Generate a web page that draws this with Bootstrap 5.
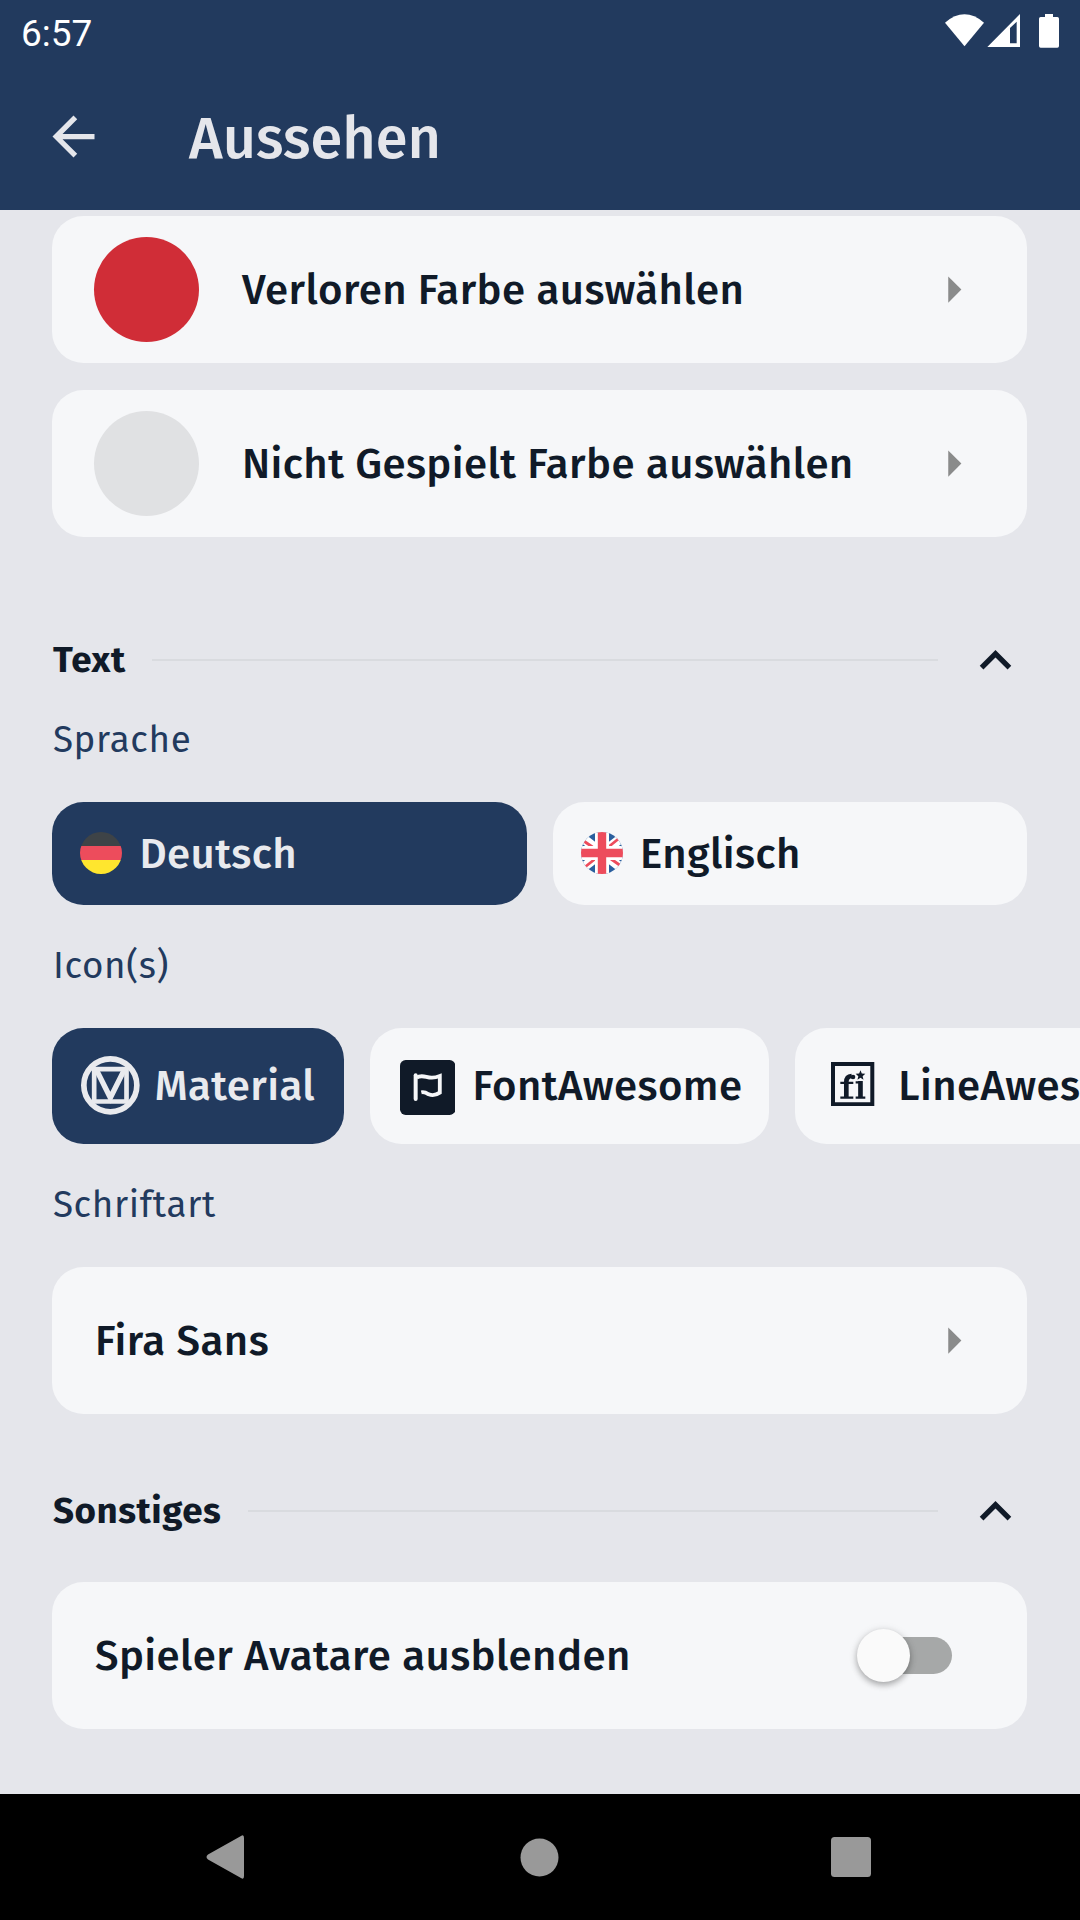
<!DOCTYPE html>
<html lang="de">
<head>
<meta charset="utf-8">
<meta name="viewport" content="width=device-width, initial-scale=1">
<title>Aussehen</title>
<link href="https://cdn.jsdelivr.net/npm/bootstrap@5.3.0/dist/css/bootstrap.min.css" rel="stylesheet">
<style>
  :root { --navy:#223a5e; --page:#e5e6eb; --tile:#f6f7f9; --ink:#101a28; }
  body { background:var(--page); font-family:"Fira Sans","Noto Sans",sans-serif; color:var(--ink); }
  svg { display:block; flex:none; }
  .screen { width:1080px; height:1920px; }
  .top-area { background:var(--navy); height:210px; flex:none; }
  .status-row { height:63px; padding:2px 21px 0 21px; font-family:Roboto,sans-serif; font-size:37px; line-height:62px; }
  .status-row span { padding-top:2px; }
  .status-row svg { margin-top:-3px; }
  .title-row { height:147px; padding-left:42px; gap:84px; color:var(--page); }
  .title-row h1 { font-size:57.75px; font-weight:500; line-height:69px; padding-top:3px; }
  .content-area { padding:6.4px 52.6px 0 52.4px; min-height:0; }
  .tile { background:var(--tile); border-radius:31.5px; letter-spacing:.41px; font-size:42px; font-weight:500; line-height:50px; white-space:nowrap; }
  .tile.active { background:var(--navy); color:#e9eaee; }
  .tile-lg { height:147px; padding:0 42.4px 0 42px; }
  .tile-lg + .tile-lg { margin-top:26.5px; }
  .tile-text { padding:1px 0 0 .6px; }
  .swatch { width:105px; height:105px; margin-right:42px; }
  .swatch-lost { background:#d02d37; }
  .swatch-idle { background:#e0e1e3; }
  .caret { fill:#8a8b8b; }
  .group-head { height:60px; gap:26.25px; font-size:36.75px; font-weight:700; letter-spacing:.55px; line-height:44px; padding-left:.5px; }
  .group-text { margin:93.4px 0 27.9px; }
  .group-misc { margin:67.5px 0 40.3px; }
  .rule { height:2px; background:#d9dbdf; }
  .label { color:var(--navy); font-size:36.75px; line-height:44px; letter-spacing:.66px; margin-bottom:39.7px; padding-left:.5px; }
  .choices { gap:26.25px; margin-bottom:39.5px; }
  .lang { height:102.75px; padding:0 27.5px; gap:17px; }
  .lang .tile-text { padding:2px 0 0 .5px; }
  .icons { margin-right:-52.6px; }
  .iconset { height:115.75px; flex:none; }
  .set-material { width:291.5px; padding-left:28.6px; gap:15px; letter-spacing:.41px; }
  .set-fa { width:399px; padding-left:30px; gap:16.5px; }
  .set-fa svg { margin-top:4px; }
  .set-la { width:372px; padding-left:36px; gap:23px; }
  .set-la svg { margin-bottom:3px; }
  .iconset .tile-text { padding-top:0; }
  .switch-track { width:82px; height:37px; border-radius:19px; background:#a6a8a8; margin-right:33.5px; }
  .switch-knob { width:53px; height:53px; margin-left:-13px; background:#fafafa; box-shadow:0 3px 6px rgba(0,0,0,.28),0 1px 10px rgba(0,0,0,.1); }
  .nav-keys { height:126px; flex:none; background:#000; padding:0 209.5px 0 206px; }
  .nav-keys svg { fill:#999; }
  .key-home { margin-left:4.5px; }
</style>
</head>
<body>
<div class="screen d-flex flex-column overflow-hidden">
  <header class="top-area">
    <div class="status-row d-flex justify-content-between align-items-center text-white">
      <span>6:57</span>
      <svg width="114" height="34" viewBox="0 0 342 102" fill="#fff">
        <path d="M0 26Q58.500-24 117 26L58.500 97Z"/>
        <path fill-rule="evenodd" d="M127 99L225 0V99ZM195 42V88H215V23Z"/>
        <path d="M300 0H324V9H337Q342 9 342 14V96Q342 101 337 101H287Q282 101 282 96V14Q282 9 287 9H300Z"/>
      </svg>
    </div>
    <div class="title-row d-flex align-items-center">
      <svg width="63" height="63" viewBox="0 0 24 24" fill="currentColor"><path d="M20 11H7.830l5.590-5.590L12 4l-8 8 8 8 1.410-1.410L7.830 13H20v-2z"/></svg>
      <h1 class="mb-0">Aussehen</h1>
    </div>
  </header>

  <main class="content-area flex-grow-1">
    <div class="tile tile-lg d-flex align-items-center">
      <span class="swatch swatch-lost rounded-circle"></span>
      <span class="tile-text flex-grow-1">Verloren Farbe auswählen</span>
      <svg class="caret" width="63" height="63" viewBox="0 0 24 24"><path d="M10 17l5-5-5-5z"/></svg>
    </div>
    <div class="tile tile-lg d-flex align-items-center">
      <span class="swatch swatch-idle rounded-circle"></span>
      <span class="tile-text flex-grow-1">Nicht Gespielt Farbe auswählen</span>
      <svg class="caret" width="63" height="63" viewBox="0 0 24 24"><path d="M10 17l5-5-5-5z"/></svg>
    </div>

    <div class="group-head group-text d-flex align-items-center">
      <span>Text</span><span class="rule flex-grow-1"></span>
      <svg width="63" height="63" viewBox="0 0 24 24" fill="currentColor"><path d="M12 8l-6 6 1.410 1.410L12 10.830l4.590 4.580L18 14z"/></svg>
    </div>
    <div class="label">Sprache</div>
    <div class="choices d-flex">
      <div class="tile lang active d-flex align-items-center w-50">
        <svg width="42" height="42" viewBox="0 0 42 42">
          <clipPath id="disc"><circle cx="21" cy="21" r="21"/></clipPath>
          <g clip-path="url(#disc)"><path fill="#3e4347" d="M0 0H42V14H0z"/><path fill="#ed4c5c" d="M0 14H42V28H0z"/><path fill="#ffe62e" d="M0 28H42V42H0z"/></g>
        </svg>
        <span class="tile-text">Deutsch</span>
      </div>
      <div class="tile lang d-flex align-items-center w-50">
        <svg width="42" height="42" viewBox="0 0 42 42">
          <g clip-path="url(#disc)" fill="none">
            <path fill="#2a5f9e" d="M0 0H42V42H0z"/>
            <path stroke="#fff" stroke-width="9.300" d="M-4 1.750L46 40.250M46 1.750L-4 40.250"/>
            <path stroke="#ed4c5c" stroke-width="2.800" d="M2 8.500L11.500 15M38.500 6L28 14.500M14 27L4 35M30 27L40 34"/>
            <path stroke="#fff" stroke-width="14" d="M21 0V42M0 21H42"/>
            <path stroke="#ed4c5c" stroke-width="8.400" d="M21 0V42M0 21H42"/>
          </g>
        </svg>
        <span class="tile-text">Englisch</span>
      </div>
    </div>

    <div class="label">Icon(s)</div>
    <div class="choices icons d-flex overflow-hidden">
      <div class="tile iconset set-material active d-flex align-items-center">
        <svg width="58.700" height="58.700" viewBox="0 0 176 176" fill="none" stroke="currentColor">
          <circle cx="88" cy="88" r="79.500" stroke-width="17"/>
          <path stroke-width="14" d="M39.500 39.500H136.500V136.500H39.500z"/>
          <path stroke-width="16" d="M47 43L88 125L129 43"/>
        </svg>
        <span class="tile-text ps-0">Material</span>
      </div>
      <div class="tile iconset set-fa d-flex align-items-center">
        <svg width="55.300" height="55" viewBox="0 0 166 165" fill="none" stroke="#f6f7f9">
          <rect width="166" height="165" rx="17" fill="#101a28" stroke="none"/>
          <path stroke-width="12" stroke-linecap="round" d="M47 46V117"/>
          <path stroke-width="11.500" d="M50 53C66 42 80 54 96 53C104 53 112 51 119.500 48V98C108 106 98 108 86 103C80 99 72 95 64 97"/>
        </svg>
        <span class="tile-text">FontAwesome</span>
      </div>
      <div class="tile iconset set-la d-flex align-items-center">
        <svg width="43.300" height="44.300" viewBox="0 0 130 133" fill="none" stroke="#101a28">
          <path stroke-width="12" d="M6 6H124V127H6z"/>
          <path stroke-width="14" d="M46 107V60Q46 43 62 42"/>
          <circle cx="66" cy="45" r="7" fill="#101a28" stroke="none"/>
          <path stroke-width="14" d="M88.500 107V57"/>
          <path stroke-width="7" d="M28 62.500H67M28 107H67M74 61H90M74 107H103"/>
          <path fill="#101a28" stroke="none" d="M88.500 25l4 9.500 10.500 1-8 7 2.500 10.500-9-5.500-9 5.500 2.500-10.500-8-7 10.500-1z"/>
        </svg>
        <span class="tile-text">LineAwesome</span>
      </div>
    </div>

    <div class="label">Schriftart</div>
    <div class="tile tile-lg d-flex align-items-center">
      <span class="tile-text flex-grow-1">Fira Sans</span>
      <svg class="caret" width="63" height="63" viewBox="0 0 24 24"><path d="M10 17l5-5-5-5z"/></svg>
    </div>

    <div class="group-head group-misc d-flex align-items-center">
      <span>Sonstiges</span><span class="rule flex-grow-1"></span>
      <svg width="63" height="63" viewBox="0 0 24 24" fill="currentColor"><path d="M12 8l-6 6 1.410 1.410L12 10.830l4.590 4.580L18 14z"/></svg>
    </div>
    <div class="tile tile-lg d-flex align-items-center">
      <span class="tile-text flex-grow-1">Spieler Avatare ausblenden</span>
      <span class="switch-track d-flex align-items-center"><span class="switch-knob rounded-circle"></span></span>
    </div>
  </main>

  <nav class="nav-keys d-flex justify-content-between align-items-center">
    <svg width="38" height="44" viewBox="0 0 38 44"><path d="M35 1Q38-1 38 3V41Q38 45 35 43L2 24.500Q-1 22 2 19.500Z"/></svg>
    <svg class="key-home" width="39" height="39" viewBox="0 0 39 39"><circle cx="19.500" cy="19.500" r="19"/></svg>
    <svg width="40" height="40" viewBox="0 0 40 40"><rect width="40" height="40" rx="3.500"/></svg>
  </nav>
</div>
<script src="https://cdn.jsdelivr.net/npm/bootstrap@5.3.0/dist/js/bootstrap.bundle.min.js"></script>
</body>
</html>
